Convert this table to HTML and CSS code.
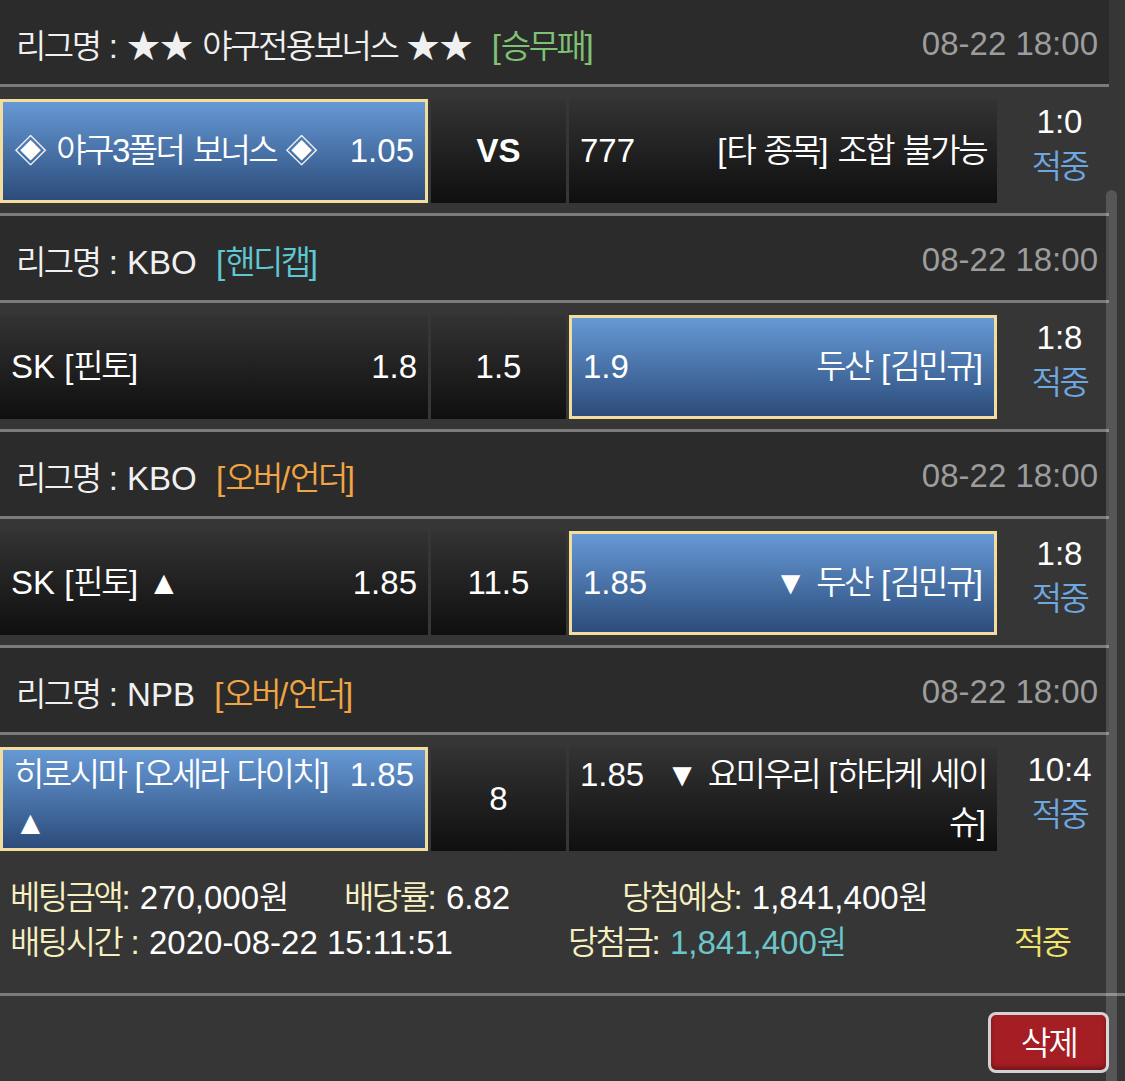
FILE: index.html
```html
<!DOCTYPE html>
<html lang="ko">
<head>
<meta charset="utf-8">
<title>베팅내역</title>
<link rel="stylesheet" href="styles.css">
</head>
<body>
<div class="list">
  <section class="game">
    <div class="league">
      <div class="league-name"><span class="ko">리그명</span> : ★★ <span class="ko">야구전용보너스</span> ★★ <span class="type green">[<span class="ko">승무패</span>]</span></div>
      <div class="time">08-22 18:00</div>
    </div>
    <div class="match">
      <div class="cell side sel"><div class="in"><span class="odd r">1.05</span>◈ <span class="ko">야구3폴더</span> <span class="ko">보너스</span> ◈</div></div>
      <div class="cell mid vs">VS</div>
      <div class="cell side"><div class="in ra"><span class="odd l">777</span>[<span class="ko">타</span> <span class="ko">종목</span>] <span class="ko">조합</span> <span class="ko">불가능</span></div></div>
      <div class="score"><div>1:0</div><div class="hit ko">적중</div></div>
    </div>
  </section>
  <section class="game">
    <div class="league">
      <div class="league-name"><span class="ko">리그명</span> : KBO <span class="type cyan">[<span class="ko">핸디캡</span>]</span></div>
      <div class="time">08-22 18:00</div>
    </div>
    <div class="match">
      <div class="cell side"><div class="in"><span class="odd r">1.8</span>SK [<span class="ko">핀토</span>]</div></div>
      <div class="cell mid">1.5</div>
      <div class="cell side sel"><div class="in ra"><span class="odd l">1.9</span><span class="ko">두산</span> [<span class="ko">김민규</span>]</div></div>
      <div class="score"><div>1:8</div><div class="hit ko">적중</div></div>
    </div>
  </section>
  <section class="game">
    <div class="league">
      <div class="league-name"><span class="ko">리그명</span> : KBO <span class="type orange">[<span class="ko">오버</span>/<span class="ko">언더</span>]</span></div>
      <div class="time">08-22 18:00</div>
    </div>
    <div class="match">
      <div class="cell side"><div class="in"><span class="odd r">1.85</span>SK [<span class="ko">핀토</span>] ▲</div></div>
      <div class="cell mid">11.5</div>
      <div class="cell side sel"><div class="in ra"><span class="odd l">1.85</span>▼ <span class="ko">두산</span> [<span class="ko">김민규</span>]</div></div>
      <div class="score"><div>1:8</div><div class="hit ko">적중</div></div>
    </div>
  </section>
  <section class="game">
    <div class="league">
      <div class="league-name"><span class="ko">리그명</span> : NPB <span class="type orange">[<span class="ko">오버</span>/<span class="ko">언더</span>]</span></div>
      <div class="time">08-22 18:00</div>
    </div>
    <div class="match">
      <div class="cell side sel"><div class="in"><span class="odd r">1.85</span><span class="ko">히로시마</span> [<span class="ko">오세라</span> <span class="ko">다이치</span>]<span> </span><span class="arrow">▲</span></div></div>
      <div class="cell mid">8</div>
      <div class="cell side"><div class="in ra"><span class="odd l">1.85</span><span class="arrow">▼</span> <span class="ko">요미우리</span> [<span class="ko">하타케</span> <span class="ko">세이</span> <span class="ko">슈</span>]</div></div>
      <div class="score"><div>10:4</div><div class="hit ko">적중</div></div>
    </div>
  </section>
</div>

<div class="summary">
  <div class="info info-1">
    <span class="col col-a"><span class="lb ko">베팅금액</span><span class="lb">:</span> 270,000<span class="ko">원</span></span>
    <span class="col col-b"><span class="lb ko">배당률</span><span class="lb">:</span> 6.82</span>
    <span class="col"><span class="lb ko">당첨예상</span><span class="lb">:</span> 1,841,400<span class="ko">원</span></span>
  </div>
  <div class="info info-2">
    <span class="col col-a"><span class="lb ko">배팅시간</span><span class="lb"> :</span> 2020-08-22 15:11:51</span>
    <span class="col col-b"><span class="lb ko">당첨금</span><span class="lb">:</span> <span class="cy">1,841,400<span class="ko">원</span></span></span>
    <span class="col yl ko">적중</span>
  </div>
</div>

<div class="actions">
  <button class="del" type="button"><span class="ko">삭제</span></button>
</div>

<div class="thumb"></div>
</body>
</html>
```

FILE: styles.css
```css
* {
  box-sizing: border-box;
  margin: 0;
  padding: 0;
}

html,
body {
  background: #363636;
}

body {
  position: relative;
  width: 1125px;
  height: 1081px;
  overflow: hidden;
  font-family: "Liberation Sans", "Noto Sans CJK KR", sans-serif;
  font-size: 33px;
  color: #ffffff;
}

.ko {
  letter-spacing: -2.5px;
  font-weight: 350;
}

.list {
  width: 1109px;
}

.league {
  height: 87px;
  display: flex;
  align-items: center;
  justify-content: space-between;
  padding: 4px 11px 0 16px;
  background: #2b2b2b;
  border-bottom: 3px solid #7b7b7b;
  color: #f0f0f0;
  white-space: nowrap;
}

.type {
  margin-left: 10px;
}

.green {
  color: #80c274;
}

.cyan {
  color: #5fc8d2;
}

.orange {
  color: #f0a444;
}

.time {
  color: #9d9d9d;
}

.match {
  display: flex;
  gap: 3px;
  padding: 12px 0 10px;
}

.game:not(:last-child) .match {
  border-bottom: 3px solid #7b7b7b;
}

.cell {
  height: 104px;
  display: flex;
  align-items: center;
  padding: 0 11px;
  background: linear-gradient(#333333, #0f0f0f);
}

.side {
  width: 428px;
}

.mid {
  width: 135px;
  justify-content: center;
}

.sel {
  background: linear-gradient(#6699d5, #2c4c7b);
  border: 3px solid #f3dd9e;
}

.vs {
  font-weight: bold;
}

.in {
  width: 100%;
  line-height: 48px;
}

.ra {
  text-align: right;
}

.r {
  float: right;
}

.l {
  float: left;
}

.score {
  flex: 1;
  padding-left: 10px;
  text-align: center;
  line-height: 45px;
}

.hit {
  color: #6ea6e0;
}

.summary {
  padding: 14px 0 28px 10px;
  line-height: 45px;
  border-bottom: 3px solid #7b7b7b;
  white-space: nowrap;
}

.info {
  display: flex;
}

.info-1 .col-a {
  width: 334px;
}

.info-1 .col-b {
  width: 278px;
}

.info-2 .col-a {
  width: 558px;
}

.info-2 .col-b {
  width: 446px;
}

.lb {
  color: #f6f0c0;
}

.cy {
  color: #6cc6c9;
}

.yl {
  color: #f3e46c;
}

.actions {
  display: flex;
  justify-content: flex-end;
  padding: 16px 16px 0 0;
}

.del {
  width: 121px;
  height: 61px;
  display: flex;
  align-items: center;
  justify-content: center;
  padding-bottom: 4px;
  background: #a41e23;
  border: 3px solid #d2d2d2;
  border-radius: 8px;
  box-shadow: inset 0 -3px 4px rgba(0, 0, 0, 0.3);
  color: #ffffff;
  font-family: inherit;
  font-size: 33px;
}

.thumb {
  position: absolute;
  left: 1106px;
  top: 190px;
  width: 11px;
  height: 920px;
  border-radius: 6px;
  background: rgba(255, 255, 255, 0.16);
}
```
